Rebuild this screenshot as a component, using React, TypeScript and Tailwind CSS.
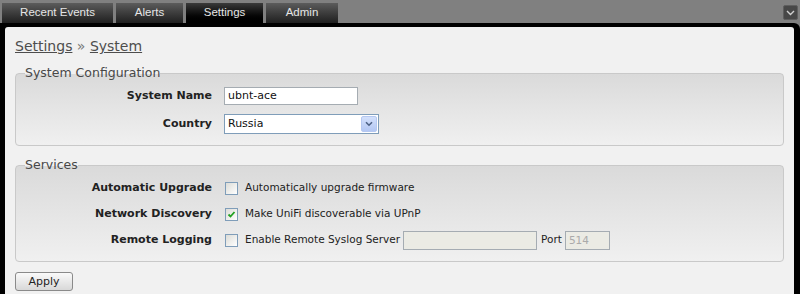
import React from "react";

const Checkbox = ({ checked }: { checked?: boolean }) => (
  <span className="w-[13px] h-[13px] border border-[#7f9db9] bg-gradient-to-br from-[#dcdcd7] to-[#ffffff] flex items-center justify-center shrink-0">
    {checked && (
      <svg width="9" height="9" viewBox="0 0 9 9">
        <path d="M1.5 4.5 L3.5 6.5 L7.5 2" stroke="#21a121" strokeWidth="1.8" fill="none" />
      </svg>
    )}
  </span>
);

const tabs = [
  { name: "Recent Events", w: "w-[111px]", active: false },
  { name: "Alerts", w: "w-[67px]", active: false },
  { name: "Settings", w: "w-[77px]", active: true },
  { name: "Admin", w: "w-[72px]", active: false },
];

export default function App() {
  return (
    <div
      className="w-[800px] h-[294px] bg-[#808080] flex flex-col overflow-hidden"
      style={{ fontFamily: '"DejaVu Sans", sans-serif' }}
    >
      <div className="h-[23px] flex items-end pl-[2px] gap-[3px] relative shrink-0">
        {tabs.map((t) => (
          <div
            key={t.name}
            className={
              "h-[20px] flex items-center justify-center text-[11.5px] text-[#e6e6e6] " +
              t.w +
              " " +
              (t.active
                ? "bg-gradient-to-b from-[#3a3a3a] to-[#000000]"
                : "bg-gradient-to-b from-[#5c5c5c] to-[#202020]")
            }
            style={{ fontFamily: '"Liberation Sans", sans-serif' }}
          >
            {t.name}
          </div>
        ))}
        <div className="absolute right-[2px] top-[5px] w-[15px] h-[15px] rounded-[2px] bg-[#474747] border border-[#5e5e5e] flex items-center justify-center">
          <svg width="9" height="6" viewBox="0 0 9 6">
            <path d="M1 1 L4.5 4.5 L8 1" stroke="#d0d0d0" strokeWidth="1.4" fill="none" />
          </svg>
        </div>
      </div>
      <div className="flex-1 bg-black rounded-tr-[6px] pt-[4px] pl-[5px] pr-[6px]">
        <div className="h-full bg-[#f1f1f1] rounded-t-[3px] px-[10px] pt-[10px]">
          <div className="h-[18px] leading-[18px] text-[14px] text-[#4d4d4d]">
            <span className="underline">Settings</span>
            <span className="text-[#777]"> » </span>
            <span className="underline">System</span>
          </div>
          <fieldset className="mt-[11px] border border-[#c9c9c9] rounded-[4px] bg-gradient-to-b from-[#dadada] to-[#f0f0f0] pb-[11px]">
            <legend className="ml-[9px] text-[12.5px] leading-[14px] text-[#484848]">System Configuration</legend>
            <div className="pt-[7px] flex flex-col gap-[9px]">
              <div className="flex items-center h-[18px]">
                <div className="w-[196px] text-right font-bold text-[11px] text-[#222]">System Name</div>
                <div className="ml-[12px] w-[134px] h-[18px] bg-white border border-[#a5acb2] text-[11px] text-[#111] leading-[16px] pl-[3px]">
                  ubnt-ace
                </div>
              </div>
              <div className="flex items-center h-[20px]">
                <div className="w-[196px] text-right font-bold text-[11px] text-[#222]">Country</div>
                <div className="ml-[12px] w-[155px] h-[20px] bg-white border border-[#7f9db9] flex items-center text-[11px] text-[#111] pl-[3px]">
                  <span className="flex-1">Russia</span>
                  <div className="w-[16px] h-[16px] mr-[1px] rounded-[2px] border border-[#b5c8f1] bg-gradient-to-b from-[#d3e0fb] to-[#b3c7f3] flex items-center justify-center">
                    <svg width="8" height="6" viewBox="0 0 8 6">
                      <path d="M1 1.2 L4 4.2 L7 1.2" stroke="#4d6185" strokeWidth="1.6" fill="none" />
                    </svg>
                  </div>
                </div>
              </div>
            </div>
          </fieldset>
          <fieldset className="mt-[12px] border border-[#c9c9c9] rounded-[4px] bg-gradient-to-b from-[#dadada] to-[#f0f0f0] pb-[11px]">
            <legend className="ml-[9px] text-[12.5px] leading-[14px] text-[#484848]">Services</legend>
            <div className="pt-[6px] flex flex-col gap-[6px]">
              <div className="flex items-center h-[20px]">
                <div className="w-[196px] text-right font-bold text-[11px] text-[#222]">Automatic Upgrade</div>
                <div className="ml-[13px]"><Checkbox /></div>
                <span className="ml-[7px] text-[10.5px] text-[#222]">Automatically upgrade firmware</span>
              </div>
              <div className="flex items-center h-[20px]">
                <div className="w-[196px] text-right font-bold text-[11px] text-[#222]">Network Discovery</div>
                <div className="ml-[13px]"><Checkbox checked /></div>
                <span className="ml-[7px] text-[10.5px] text-[#222]">Make UniFi discoverable via UPnP</span>
              </div>
              <div className="flex items-center h-[20px]">
                <div className="w-[196px] text-right font-bold text-[11px] text-[#222]">Remote Logging</div>
                <div className="ml-[13px]"><Checkbox /></div>
                <span className="ml-[7px] text-[10.5px] text-[#222]">Enable Remote Syslog Server</span>
                <div className="ml-[3px] w-[134px] h-[19px] bg-[#ebebe4] border border-[#a5acb2]" />
                <span className="ml-[4px] text-[10.5px] text-[#222]">Port</span>
                <div className="ml-[3px] w-[45px] h-[19px] bg-[#ebebe4] border border-[#a5acb2] text-[10.5px] text-[#aaa] leading-[17px] pl-[3px]">
                  514
                </div>
              </div>
            </div>
          </fieldset>
          <button className="mt-[10px] w-[58px] h-[19px] rounded-[3px] border border-[#8a8a8a] bg-gradient-to-b from-[#fafafa] to-[#d8d8d8] text-[11px] text-[#222] leading-[17px]">
            Apply
          </button>
        </div>
      </div>
    </div>
  );
}
